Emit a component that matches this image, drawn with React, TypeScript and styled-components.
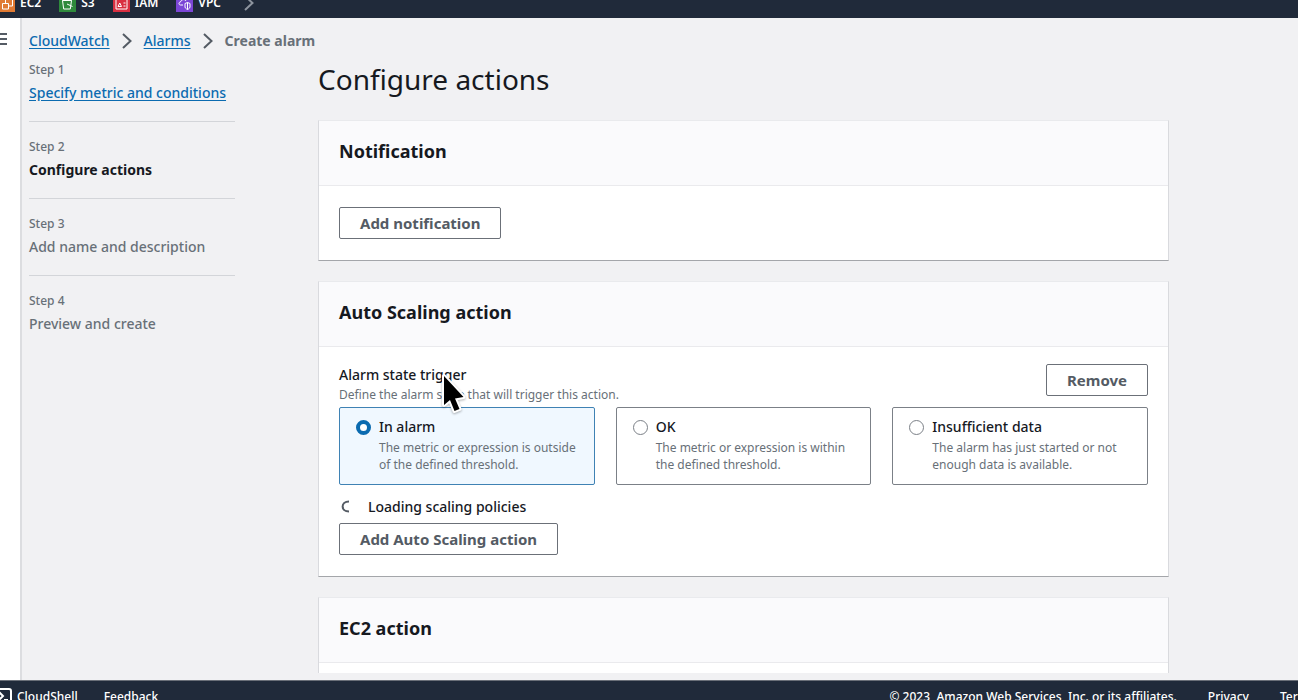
import React from "react";
import styled, { createGlobalStyle, css } from "styled-components";

const ink = "#16191f";
const grey = "#545b64";
const muted = "#687078";
const link = "#0b6bb0";
const navy = "#202a3a";

const GlobalStyle = createGlobalStyle`
  * { box-sizing: border-box; }
  body {
    margin: 0;
    background: #f1f1f3;
    color: ${ink};
    font-family: "Noto Sans", "Open Sans", sans-serif;
    font-size: 14px;
    font-weight: 500;
    line-height: 20px;
  }
  h1, h2, p, ol, ul { margin: 0; padding: 0; }
  ol, ul { list-style: none; }
`;

const Shell = styled.div`
  display: flex;
  flex-direction: column;
  height: 100vh;
  overflow: hidden;
`;

const TopBar = styled.header`
  flex: none;
  height: 18px;
  overflow: hidden;
  display: flex;
  align-items: flex-end;
  padding-bottom: 5px;
  background: ${navy};
`;

const Shortcuts = styled.nav`
  display: flex;
  align-items: center;
  gap: 18px;
  margin-left: -2px;
`;

const Shortcut = styled.a`
  display: flex;
  align-items: center;
  gap: 5px;
  color: #fff;
  font-size: 12px;
  font-weight: 600;
  text-decoration: none;
  &:last-of-type { margin-right: 5px; }
`;

const Body = styled.div`
  flex: 1;
  min-height: 0;
  display: flex;
`;

const Rail = styled.aside`
  flex: none;
  width: 22px;
  background: #fff;
  border-right: 2px solid #dcdde0;
  padding-top: 14px;
`;

const MenuButton = styled.button`
  display: block;
  border: 0;
  padding: 0;
  background: none;
  line-height: 0;
  color: ${grey};
`;

const Content = styled.div`
  flex: 1;
  min-width: 0;
  overflow: hidden;
  padding: 13px 129px 0 7px;
  margin-bottom: 7px;
`;

const Crumbs = styled.ol`
  display: flex;
  align-items: center;
  gap: 12px;
  line-height: 20px;
  color: ${muted};
  font-weight: 700;
`;

const Crumb = styled.li`
  display: flex;
  align-items: center;
  gap: 12px;
`;

const Link = styled.a`
  color: ${link};
  font-weight: 500;
  text-decoration: underline;
  text-underline-offset: 2px;
`;

const Columns = styled.div`
  display: flex;
  gap: 83px;
`;

const Steps = styled.ol`
  flex: none;
  width: 206px;
  padding-top: 10px;
`;

const Step = styled.li<{ $active?: boolean }>`
  display: flex;
  flex-direction: column;
  gap: 4px;
  padding-bottom: 18px;
  margin-bottom: 16px;
  border-bottom: 1px solid #d3d5d9;
  color: ${(p) => (p.$active ? ink : muted)};
  font-weight: ${(p) => (p.$active ? 700 : 500)};
  &:last-child { border-bottom: 0; }
`;

const StepNumber = styled.span`
  color: ${muted};
  font-size: 12px;
  font-weight: 500;
  line-height: 18px;
`;

const Main = styled.main`
  flex: 1;
  min-width: 0;
  display: flex;
  flex-direction: column;
  gap: 20px;
`;

const Title = styled.h1`
  padding: 9px 0 2px;
  font-size: 28px;
  font-weight: 400;
  line-height: 38px;
`;

const Card = styled.section`
  background: #fff;
  border: 1px solid #d9dade;
  border-top-color: #e9eaed;
  border-bottom-color: #a4a6aa;
`;

const CardHeader = styled.div`
  padding: 18px 20px 22px;
  background: #fafafc;
  border-bottom: 1px solid #eaeaed;
`;

const CardTitle = styled.h2`
  font-size: 18px;
  font-weight: 700;
  line-height: 24px;
`;

const CardBody = styled.div<{ $tight?: boolean }>`
  display: flex;
  flex-direction: column;
  align-items: flex-start;
  padding: ${(p) => (p.$tight ? "17px" : "21px")} 20px 21px;
`;

const Button = styled.button`
  height: 32px;
  padding: 0 20px;
  border: 1px solid #6b7078;
  border-radius: 2px;
  background: #fff;
  color: ${grey};
  font: inherit;
  font-size: 15px;
  font-weight: 700;
`;

const TriggerHead = styled.div`
  align-self: stretch;
  display: flex;
  align-items: flex-start;
  justify-content: space-between;
`;

const TriggerLabel = styled.p`
  line-height: 22px;
`;

const Hint = styled.p`
  color: ${muted};
  font-size: 12px;
  font-weight: 400;
  line-height: 18px;
`;

const Tiles = styled.div`
  align-self: stretch;
  display: grid;
  grid-template-columns: repeat(3, 1fr);
  gap: 21px;
  margin-top: 3px;
`;

const Tile = styled.label<{ $selected?: boolean }>`
  display: flex;
  align-items: flex-start;
  gap: 8px;
  min-height: 78px;
  padding: 9px 16px;
  border: 1px solid #7b8087;
  border-radius: 2px;
  background: #fff;
  ${(p) =>
    p.$selected &&
    css`
      border-color: #3f82b4;
      background: #f0f8ff;
    `}
`;

const Radio = styled.input`
  appearance: none;
  flex: none;
  width: 15px;
  height: 15px;
  margin: 3px 0 0;
  border: 1px solid #7b8087;
  border-radius: 50%;
  background: #fff;
  &:checked { border: 4px solid ${link}; }
`;

const TileText = styled.span`
  display: flex;
  flex-direction: column;
`;

const TileName = styled.span`
  margin-bottom: 2px;
`;

const TileHint = styled.span`
  color: ${muted};
  font-size: 12px;
  font-weight: 400;
  line-height: 17px;
`;

const Loading = styled.div`
  display: flex;
  align-items: center;
  gap: 17px;
  padding: 12px 0 6px;
`;

const Footer = styled.footer`
  flex: none;
  height: 20px;
  overflow: hidden;
  display: flex;
  align-items: flex-start;
  justify-content: space-between;
  border-top: 1px solid #6a6f78;
  padding-top: 7px;
  background: ${navy};
  color: #fff;
  font-size: 12px;
  font-weight: 500;
  line-height: 18px;
`;

const FooterGroup = styled.div<{ $gap: number; $shift?: "left" | "right" }>`
  display: flex;
  gap: ${(p) => p.$gap}px;
  ${(p) => p.$shift === "left" && "margin-left: -6px;"}
  ${(p) => p.$shift === "right" && "margin-right: -17px;"}
`;

const FooterLink = styled.a`
  display: flex;
  gap: 5px;
  color: inherit;
  text-decoration: none;
`;

const Pointer = styled.svg`
  position: absolute;
  left: 437px;
  top: 368px;
  pointer-events: none;
  filter: drop-shadow(0 1px 1px rgba(0, 0, 0, 0.3));
`;

const services = [
  {
    name: "EC2",
    color: "#e07a33",
    art: <path d="M4.500 8.500h6v5.500h-6zM7.500 8.500V4.500h7v6.500h-4" />,
  },
  {
    name: "S3",
    color: "#2f8a3c",
    art: <path d="M3.500 5.500h9l-1.200 8.500H4.700zM3.500 5.500c1-2 8-2 9 0M8 9l5.500 2.500" />,
  },
  {
    name: "IAM",
    color: "#d92f41",
    art: <path d="M3 4.500h11v9.500H3zM5 11.500l1.800-3.500 1.700 3.500zM10.500 8h2M10.500 11h2" />,
  },
  {
    name: "VPC",
    color: "#7c46d6",
    art: <path d="M7 10H4.500C2.500 10 2.500 7 4.500 7 5 4.500 9 3.500 10 6M9 8.500l2.500-1 2.500 1V12c0 1.500-2.500 2.500-2.500 2.500S9 13.500 9 12zM11.500 7.500V14.500" />,
  },
];

const ServiceIcon = ({ color, children }: { color: string; children: React.ReactNode }) => (
  <svg width="17" height="17" viewBox="0 0 17 17" fill="none" stroke="#fff" strokeWidth="1" aria-hidden="true">
    <rect width="17" height="17" fill={color} stroke="none" />
    {children}
  </svg>
);

const Chevron = ({ color = grey }: { color?: string }) => (
  <svg width="10" height="16" viewBox="0 0 10 16" fill="none" stroke={color} strokeWidth="2" aria-hidden="true">
    <path d="M1 1l7.500 7L1 15" />
  </svg>
);

const steps = ["Specify metric and conditions", "Configure actions", "Add name and description", "Preview and create"];

const states = [
  { name: "In alarm", hint: ["The metric or expression is outside", "of the defined threshold."] },
  { name: "OK", hint: ["The metric or expression is within", "the defined threshold."] },
  { name: "Insufficient data", hint: ["The alarm has just started or not", "enough data is available."] },
];

export default function App() {
  const [selected, setSelected] = React.useState("In alarm");
  return (
    <Shell>
      <GlobalStyle />
      <TopBar>
        <Shortcuts aria-label="Favorites">
          {services.map((s) => (
            <Shortcut href="#" key={s.name}>
              <ServiceIcon color={s.color}>{s.art}</ServiceIcon>
              {s.name}
            </Shortcut>
          ))}
          <Chevron color="#8d949e" />
        </Shortcuts>
      </TopBar>
      <Body>
        <Rail>
          <MenuButton aria-label="Open navigation">
            <svg width="8" height="14" viewBox="0 0 8 14" stroke="currentColor" strokeWidth="2" aria-hidden="true">
              <path d="M0 2h7M0 7h7M0 12h7" />
            </svg>
          </MenuButton>
        </Rail>
        <Content>
          <Crumbs>
            <Crumb><Link href="#">CloudWatch</Link><Chevron /></Crumb>
            <Crumb><Link href="#">Alarms</Link><Chevron /></Crumb>
            <Crumb aria-current="page">Create alarm</Crumb>
          </Crumbs>
          <Columns>
            <Steps>
              {steps.map((s, i) => (
                <Step key={s} $active={i === 1}>
                  <StepNumber>Step {i + 1}</StepNumber>
                  {i === 0 ? <Link href="#">{s}</Link> : <span>{s}</span>}
                </Step>
              ))}
            </Steps>
            <Main>
              <Title>Configure actions</Title>
              <Card>
                <CardHeader><CardTitle>Notification</CardTitle></CardHeader>
                <CardBody><Button>Add notification</Button></CardBody>
              </Card>
              <Card>
                <CardHeader><CardTitle>Auto Scaling action</CardTitle></CardHeader>
                <CardBody $tight>
                  <TriggerHead>
                    <div>
                      <TriggerLabel id="trigger">Alarm state trigger</TriggerLabel>
                      <Hint>Define the alarm state that will trigger this action.</Hint>
                    </div>
                    <Button>Remove</Button>
                  </TriggerHead>
                  <Tiles role="radiogroup" aria-labelledby="trigger">
                    {states.map((s) => (
                      <Tile key={s.name} $selected={selected === s.name}>
                        <Radio type="radio" name="state" checked={selected === s.name} onChange={() => setSelected(s.name)} />
                        <TileText>
                          <TileName>{s.name}</TileName>
                          {s.hint.map((line) => <TileHint key={line}>{line}</TileHint>)}
                        </TileText>
                      </Tile>
                    ))}
                  </Tiles>
                  <Loading role="status">
                    <svg width="12" height="14" viewBox="0 0 12 14" fill="none" stroke={grey} strokeWidth="2" aria-hidden="true">
                      <path d="M10 1.500C1.500 1.500 1.500 11.500 10 11.500" />
                    </svg>
                    Loading scaling policies
                  </Loading>
                  <Button>Add Auto Scaling action</Button>
                </CardBody>
              </Card>
              <Card>
                <CardHeader><CardTitle>EC2 action</CardTitle></CardHeader>
                <CardBody><Button>Add EC2 action</Button></CardBody>
              </Card>
            </Main>
          </Columns>
        </Content>
      </Body>
      <Footer>
        <FooterGroup $gap={26} $shift="left">
          <FooterLink href="#">
            <svg width="18" height="16" viewBox="0 0 18 16" fill="none" stroke="#fff" strokeWidth="2" aria-hidden="true">
              <rect x="1" y="1" width="16" height="14" rx="2" />
              <path d="M5 4l4 4-4 4M10 12h4" />
            </svg>
            CloudShell
          </FooterLink>
          <FooterLink href="#">Feedback</FooterLink>
        </FooterGroup>
        <FooterGroup $gap={31} $shift="right">
          <span>© 2023, Amazon Web Services, Inc. or its affiliates.</span>
          <FooterLink href="#">Privacy</FooterLink>
          <FooterLink href="#">Terms</FooterLink>
        </FooterGroup>
      </Footer>
      <Pointer width="32" height="50" viewBox="0 0 32 50" aria-hidden="true">
        <path
          d="M7 8v29l6-5 4.500 11 5-2-4.500-10.500L26.500 29z"
          fill="#000"
          stroke="#fff"
          strokeWidth="4"
          strokeLinejoin="round"
          paintOrder="stroke"
        />
      </Pointer>
    </Shell>
  );
}
